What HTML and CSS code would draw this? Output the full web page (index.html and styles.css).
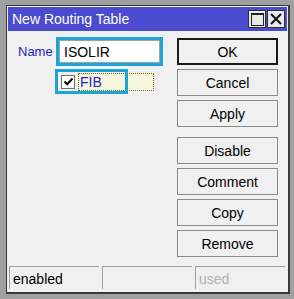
FILE: index.html
```html
<!DOCTYPE html>
<html lang="en">
<head>
    <meta charset="UTF-8">
    <title>New Routing Table</title>
    <link rel="stylesheet" href="styles.css">
</head>
<body>
    <div class="window">
        <div class="titlebar">
            <span class="title">New Routing Table</span>
            <div class="title-buttons">
                <span class="tbtn"><span class="max-icon"></span></span>
                <span class="tbtn">
                    <svg width="14" height="14" viewBox="0 0 14 14">
                        <path d="M2 2 L12 12 M12 2 L2 12" stroke="#111" stroke-width="2"/>
                    </svg>
                </span>
            </div>
        </div>
        <div class="content">
            <div class="form">
                <div class="row">
                    <label class="label" for="name">Name</label>
                    <div class="hl">
                        <input class="field" id="name" type="text" value="ISOLIR">
                    </div>
                </div>
                <div class="row check-row">
                    <span class="focus-rect"></span>
                    <div class="hl hl-check">
                        <span class="checkbox">
                            <svg width="11" height="11" viewBox="0 0 11 11">
                                <path d="M1.5 5.5 L4.2 8.2 L9.5 2.5" fill="none" stroke="#000" stroke-width="2"/>
                            </svg>
                        </span>
                        <span class="check-label">FIB</span>
                    </div>
                </div>
            </div>
            <div class="buttons">
                <button class="btn btn-default">OK</button>
                <button class="btn">Cancel</button>
                <button class="btn">Apply</button>
                <button class="btn group-start">Disable</button>
                <button class="btn">Comment</button>
                <button class="btn">Copy</button>
                <button class="btn">Remove</button>
            </div>
        </div>
        <div class="statusbar">
            <div class="cell">enabled</div>
            <div class="cell"></div>
            <div class="cell muted">used</div>
        </div>
    </div>
</body>
</html>
```

FILE: styles.css
```css
body {
    margin: 0;
    background-color: #a0a0a0;
    font-family: 'Liberation Sans', Arial, sans-serif;
    font-size: 13px;
    color: #000;
}
.window {
    box-sizing: border-box;
    width: 284px;
    height: 289px;
    margin: 5px 0 0 6px;
    border: 1px solid #383838;
    border-right-width: 2px;
    border-bottom-width: 2px;
    background-color: #f0f0f0;
    display: flex;
    flex-direction: column;
}
.titlebar {
    height: 24px;
    margin: 1px 1px 0 1px;
    background-color: #4b4bcf;
    display: flex;
    align-items: center;
    justify-content: space-between;
}
.title {
    color: #fff;
    font-size: 14px;
    padding-left: 4px;
}
.title-buttons {
    display: flex;
    gap: 1px;
    padding-right: 2px;
}
.tbtn {
    box-sizing: border-box;
    width: 18px;
    height: 18px;
    background-color: #e8e8e8;
    border: 1px solid #303030;
    display: flex;
    align-items: center;
    justify-content: center;
}
.max-icon {
    box-sizing: border-box;
    width: 13px;
    height: 13px;
    border: 1px solid #222;
    border-top-width: 2px;
}
.content {
    flex: 1;
    display: flex;
    justify-content: space-between;
    padding: 6px 10px 0 10px;
}
.form {
    display: flex;
    flex-direction: column;
    gap: 3px;
}
.row {
    display: flex;
    align-items: center;
}
.label {
    color: #2424c0;
    width: 38px;
    padding-left: 1px;
}
.hl {
    border: 3px solid #1ba3da;
    padding: 0;
}
.field {
    box-sizing: border-box;
    width: 101px;
    height: 23px;
    margin: 0;
    border: 1px solid #a0a0a0;
    padding: 2px 4px;
    font-family: inherit;
    font-size: 14px;
    background-color: #fff;
}
.check-row {
    padding-left: 38px;
    position: relative;
}
.hl-check {
    position: relative;
    display: flex;
    align-items: center;
    width: 64px;
    height: 19px;
    padding-left: 3px;
}
.checkbox {
    box-sizing: border-box;
    width: 14px;
    height: 14px;
    border: 1px solid #707070;
    background-color: #fff;
    display: flex;
    align-items: center;
    justify-content: center;
}
.check-label {
    color: #2222d0;
    font-size: 14px;
    margin-left: 5px;
}
.focus-rect {
    position: absolute;
    left: 61px;
    top: 4px;
    width: 74px;
    height: 16px;
    border: 1px dotted #707000;
    background-color: #f6f6dc;
}
.buttons {
    display: flex;
    flex-direction: column;
    gap: 4px;
    padding-top: 1px;
}
.btn {
    box-sizing: border-box;
    width: 101px;
    height: 27px;
    margin: 0;
    border: 1px solid #8a8a8a;
    background-color: #f0f0f0;
    font-family: inherit;
    font-size: 14px;
    color: #000;
    padding: 0;
}
.btn-default {
    border: 2px solid #1a1a1a;
}
.group-start {
    margin-top: 6px;
}
.statusbar {
    display: flex;
    gap: 3px;
    padding: 0 3px 3px 2px;
}
.cell {
    flex: 1;
    height: 23px;
    box-sizing: border-box;
    border-top: 1px solid #a0a0a0;
    border-left: 1px solid #a0a0a0;
    padding: 4px 0 0 3px;
    font-size: 14px;
}
.muted {
    color: #b0b0b0;
}
```
